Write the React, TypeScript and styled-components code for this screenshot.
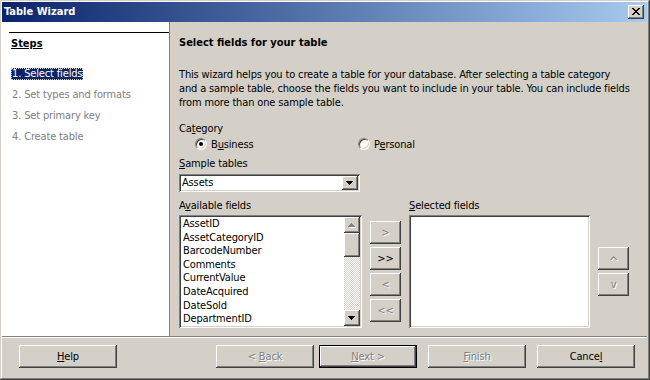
import React from "react";
import styled, { createGlobalStyle, css } from "styled-components";

const GlobalStyle = createGlobalStyle`
  html, body {
    margin: 0;
    padding: 0;
    background: #d4d0c8;
  }
  body {
    font-family: "DejaVu Sans Condensed", Tahoma, "Liberation Sans", sans-serif;
    font-size: 11px;
    letter-spacing: -0.15px;
    color: #000;
  }
  * {
    box-sizing: border-box;
  }
`;

const raised = css`
  background: #d4d0c8;
  box-shadow: inset -1px -1px #404040, inset 1px 1px #fff,
    inset -2px -2px #808080, inset 2px 2px #d4d0c8;
`;

const sunken = css`
  background: #fff;
  box-shadow: inset 1px 1px #808080, inset -1px -1px #fff,
    inset 2px 2px #404040, inset -2px -2px #d4d0c8;
`;

const Window = styled.div`
  width: 650px;
  height: 380px;
  display: flex;
  flex-direction: column;
  padding: 2px 3px 3px 2px;
  background: #d4d0c8;
  box-shadow: inset -1px -1px #404040, inset 1px 1px #d4d0c8,
    inset -2px -2px #808080, inset 2px 2px #fff;
`;

const TitleBar = styled.div`
  height: 20px;
  display: flex;
  align-items: center;
  justify-content: space-between;
  padding: 0 3px 0 2px;
  background: linear-gradient(to right, #0a246a, #a6caf0);
`;

const TitleText = styled.span`
  color: #fff;
  font-weight: bold;
  letter-spacing: 0;
  line-height: 14px;
`;

const CloseButton = styled.div`
  ${raised};
  width: 16px;
  height: 14px;
  display: flex;
  align-items: center;
  justify-content: center;
`;

const Body = styled.div`
  height: 314px;
  display: flex;
`;

const Sidebar = styled.div`
  width: 168px;
  background: #fff;
  border-right: 1px solid #808080;
  padding: 10px 0 0 7px;
`;

const StepsHeader = styled.div`
  border-top: 1px solid #000;
  padding: 4px 0 0 2px;
  font-weight: bold;
  letter-spacing: 0;
  text-decoration: underline;
  line-height: 14px;
`;

const StepList = styled.div`
  margin-top: 12px;
`;

const StepItem = styled.div<{ $active?: boolean }>`
  height: 21px;
  display: flex;
  align-items: center;
  padding-left: 2px;
  color: ${({ $active }) => ($active ? "#fff" : "#808080")};
`;

const StepLabel = styled.span<{ $active?: boolean }>`
  line-height: 12px;
  padding: 0 1px;
  ${({ $active }) =>
    $active &&
    css`
      background: #0a246a;
      outline: 1px dotted #d4d0c8;
      outline-offset: -1px;
    `}
`;

const Main = styled.div`
  flex: 1;
  padding: 14px 0 0 9px;
`;

const Heading = styled.div`
  font-weight: bold;
  letter-spacing: 0;
  line-height: 14px;
`;

const Description = styled.p`
  margin: 18px 0 0;
  line-height: 14px;
  white-space: nowrap;
`;

const FieldLabel = styled.div<{ $top: number }>`
  margin-top: ${({ $top }) => $top}px;
  line-height: 14px;
  white-space: nowrap;
`;

const RadioRow = styled.div`
  height: 16px;
  display: flex;
  align-items: center;
  padding-left: 16px;
`;

const RadioOption = styled.label<{ $width?: number }>`
  display: flex;
  align-items: center;
  gap: 4px;
  width: ${({ $width }) => ($width ? `${$width}px` : "auto")};
`;

const RadioCircle = styled.span<{ $checked?: boolean }>`
  width: 12px;
  height: 12px;
  border-radius: 50%;
  background: #fff;
  border: 1px solid;
  border-color: #808080 #fff #fff #808080;
  box-shadow: inset 1px 1px #404040, inset -1px -1px #d4d0c8;
  display: flex;
  align-items: center;
  justify-content: center;
  &::after {
    content: "";
    width: 4px;
    height: 4px;
    border-radius: 50%;
    background: ${({ $checked }) => ($checked ? "#000" : "transparent")};
  }
`;

const Combo = styled.div`
  ${sunken};
  margin-top: 3px;
  width: 181px;
  height: 18px;
  display: flex;
  align-items: center;
  justify-content: space-between;
  padding: 2px;
`;

const ComboText = styled.span`
  padding-left: 1px;
  line-height: 14px;
`;

const ArrowButton = styled.div<{ $h: number }>`
  ${raised};
  width: 16px;
  height: ${({ $h }) => $h}px;
  display: flex;
  align-items: center;
  justify-content: center;
  flex-shrink: 0;
`;

const Columns = styled.div`
  display: flex;
  align-items: flex-start;
  gap: 8px;
  margin-top: 7px;
`;

const Column = styled.div<{ $width: number; $top?: number }>`
  width: ${({ $width }) => $width}px;
  margin-top: ${({ $top }) => $top || 0}px;
  display: flex;
  flex-direction: column;
`;

const ButtonStack = styled.div`
  display: flex;
  flex-direction: column;
  gap: 3px;
`;

const ListBox = styled.div`
  ${sunken};
  margin-top: 2px;
  height: 113px;
  padding: 2px;
  display: flex;
  overflow: hidden;
`;

const ListItems = styled.div`
  flex: 1;
  padding-left: 2px;
  overflow: hidden;
`;

const ListItem = styled.div`
  line-height: 13.6px;
  white-space: nowrap;
`;

const ScrollBar = styled.div`
  width: 16px;
  display: flex;
  flex-direction: column;
  background-color: #ece9e3;
  background-image: repeating-conic-gradient(#fff 0 25%, #d4d0c8 0 50%);
  background-size: 2px 2px;
`;

const Thumb = styled.div`
  ${raised};
  height: 24px;
`;

const Track = styled.div`
  flex: 1;
`;

const Button = styled.div<{ $width: number; $disabled?: boolean; $default?: boolean }>`
  ${raised};
  width: ${({ $width }) => $width}px;
  height: 23px;
  display: flex;
  align-items: center;
  justify-content: center;
  line-height: 14px;
  white-space: nowrap;
  color: ${({ $disabled }) => ($disabled ? "#808080" : "#000")};
  text-shadow: ${({ $disabled }) => ($disabled ? "1px 1px #fff" : "none")};
  ${({ $default }) =>
    $default &&
    css`
      box-shadow: inset 0 0 0 1px #000, inset -2px -2px #404040,
        inset 2px 2px #fff, inset -3px -3px #808080;
    `}
`;

const Caret = styled.span`
  font-size: 13px;
  line-height: 13px;
  padding-top: 5px;
`;

const Separator = styled.div`
  border-top: 1px solid #808080;
  border-bottom: 1px solid #fff;
`;

const Footer = styled.div`
  flex: 1;
  display: flex;
  align-items: flex-start;
  padding: 7px 0 0 17px;
`;

const FooterGroup = styled.div<{ $space: number }>`
  display: flex;
  gap: 5px;
  margin-left: ${({ $space }) => $space}px;
`;

const Key = styled.span`
  text-decoration: underline;
`;

const pixels = (rows: string[], color: string) =>
  rows.flatMap((row, y) =>
    row.split("").map((c, x) =>
      c === "x" ? <rect key={`${x}-${y}`} x={x} y={y} width={1} height={1} fill={color} /> : null
    )
  );

const PixelIcon: React.FC<{ rows: string[]; color: string; shadow?: boolean }> = ({
  rows,
  color,
  shadow,
}) => (
  <svg
    width={rows[0].length + 1}
    height={rows.length + 1}
    viewBox={`0 0 ${rows[0].length + 1} ${rows.length + 1}`}
    shapeRendering="crispEdges"
  >
    {shadow && <g transform="translate(1 1)">{pixels(rows, "#fff")}</g>}
    {pixels(rows, color)}
  </svg>
);

const closeGlyph = [
  "xx....xx",
  ".xx..xx.",
  "..xxxx..",
  "...xx...",
  "..xxxx..",
  ".xx..xx.",
  "xx....xx",
];
const downGlyph = ["xxxxxxx", ".xxxxx.", "..xxx..", "...x..."];
const upGlyph = ["...x...", "..xxx..", ".xxxxx.", "xxxxxxx"];

const steps = ["1. Select fields", "2. Set types and formats", "3. Set primary key", "4. Create table"];

const fields = [
  "AssetID",
  "AssetCategoryID",
  "BarcodeNumber",
  "Comments",
  "CurrentValue",
  "DateAcquired",
  "DateSold",
  "DepartmentID",
];

export default function App() {
  return (
    <>
      <GlobalStyle />
      <Window>
        <TitleBar>
          <TitleText>Table Wizard</TitleText>
          <CloseButton>
            <PixelIcon rows={closeGlyph} color="#000" />
          </CloseButton>
        </TitleBar>
        <Body>
          <Sidebar>
            <StepsHeader>Steps</StepsHeader>
            <StepList>
              {steps.map((s, i) => (
                <StepItem key={s} $active={i === 0}>
                  <StepLabel $active={i === 0}>{s}</StepLabel>
                </StepItem>
              ))}
            </StepList>
          </Sidebar>
          <Main>
            <Heading>Select fields for your table</Heading>
            <Description>
              This wizard helps you to create a table for your database. After selecting a table category
              <br />
              and a sample table, choose the fields you want to include in your table. You can include fields
              <br />
              from more than one sample table.
            </Description>
            <FieldLabel $top={12}>
              Ca<Key>t</Key>egory
            </FieldLabel>
            <RadioRow>
              <RadioOption $width={163}>
                <RadioCircle $checked />
                <span>
                  B<Key>u</Key>siness
                </span>
              </RadioOption>
              <RadioOption>
                <RadioCircle />
                <span>
                  P<Key>e</Key>rsonal
                </span>
              </RadioOption>
            </RadioRow>
            <FieldLabel $top={5}>
              <Key>S</Key>ample tables
            </FieldLabel>
            <Combo>
              <ComboText>Assets</ComboText>
              <ArrowButton $h={14}>
                <PixelIcon rows={downGlyph} color="#000" />
              </ArrowButton>
            </Combo>
            <Columns>
              <Column $width={183}>
                <FieldLabel $top={0}>
                  A<Key>v</Key>ailable fields
                </FieldLabel>
                <ListBox>
                  <ListItems>
                    {fields.map((f) => (
                      <ListItem key={f}>{f}</ListItem>
                    ))}
                  </ListItems>
                  <ScrollBar>
                    <ArrowButton $h={16}>
                      <PixelIcon rows={upGlyph} color="#808080" shadow />
                    </ArrowButton>
                    <Thumb />
                    <Track />
                    <ArrowButton $h={16}>
                      <PixelIcon rows={downGlyph} color="#000" />
                    </ArrowButton>
                  </ScrollBar>
                </ListBox>
              </Column>
              <Column $width={31} $top={22}>
                <ButtonStack>
                  <Button $width={31} $disabled>&gt;</Button>
                  <Button $width={31}>&gt;&gt;</Button>
                  <Button $width={31} $disabled>&lt;</Button>
                  <Button $width={31} $disabled>&lt;&lt;</Button>
                </ButtonStack>
              </Column>
              <Column $width={181}>
                <FieldLabel $top={0}>
                  <Key>S</Key>elected fields
                </FieldLabel>
                <ListBox />
              </Column>
              <Column $width={31} $top={48}>
                <ButtonStack>
                  <Button $width={31} $disabled>
                    <Caret>^</Caret>
                  </Button>
                  <Button $width={31} $disabled>v</Button>
                </ButtonStack>
              </Column>
            </Columns>
          </Main>
        </Body>
        <Separator />
        <Footer>
          <Button $width={98}>
            <span>
              <Key>H</Key>elp
            </span>
          </Button>
          <FooterGroup $space={99}>
            <Button $width={98} $disabled>
              <span>
                &lt; <Key>B</Key>ack
              </span>
            </Button>
            <Button $width={98} $disabled $default>
              <span>
                <Key>N</Key>ext &gt;
              </span>
            </Button>
          </FooterGroup>
          <FooterGroup $space={11}>
            <Button $width={98} $disabled>
              <span>
                <Key>F</Key>inish
              </span>
            </Button>
          </FooterGroup>
          <FooterGroup $space={11}>
            <Button $width={98}>
              <span>
                Cance<Key>l</Key>
              </span>
            </Button>
          </FooterGroup>
        </Footer>
      </Window>
    </>
  );
}
